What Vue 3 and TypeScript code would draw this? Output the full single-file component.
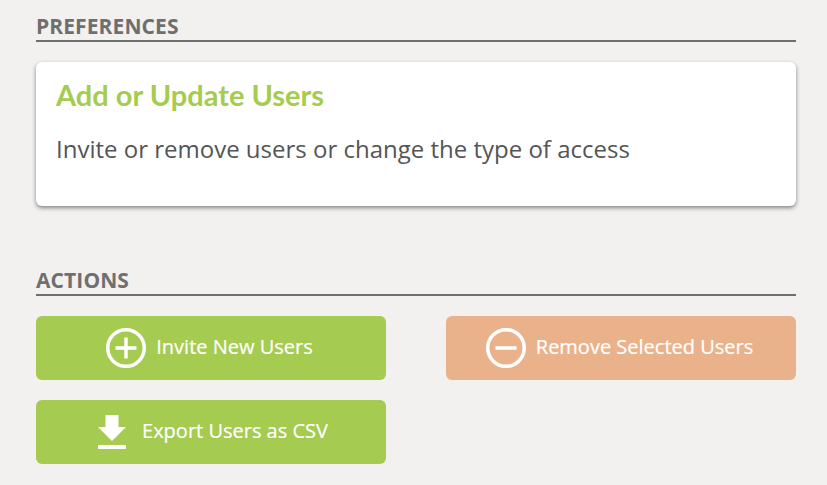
<template>
  <div class="page">
    <section class="section prefs">
      <h2 class="section-title">PREFERENCES</h2>
      <div class="card">
        <h3 class="card-title">Add or Update Users</h3>
        <p class="card-text">Invite or remove users or change the type of access</p>
      </div>
    </section>

    <section class="section">
      <h2 class="section-title">ACTIONS</h2>
      <div class="actions">
        <button
          v-for="a in actions"
          :key="a.label"
          class="action-btn"
          :class="{ danger: a.icon === 'minus', 'with-download': a.icon === 'download' }"
        >
          <svg v-if="a.icon === 'download'" viewBox="0 0 28 34" width="28" height="34">
            <path d="M7.500 0H20.500V12H28L14 26L0 12H7.500Z" fill="#fff" />
            <rect x="0" y="30" width="28" height="4" fill="#fff" />
          </svg>
          <svg v-else viewBox="0 0 40 40" width="40" height="40">
            <circle cx="20" cy="20" r="18.250" fill="none" stroke="#fff" stroke-width="3.500" />
            <rect x="9.500" y="18.250" width="21" height="3.500" fill="#fff" />
            <rect v-if="a.icon === 'plus'" x="18.250" y="9.500" width="3.500" height="21" fill="#fff" />
          </svg>
          <span>{{ a.label }}</span>
        </button>
      </div>
    </section>
  </div>
</template>

<script setup lang="ts">
interface Action {
  label: string;
  icon: 'plus' | 'minus' | 'download';
}

const actions: Action[] = [
  { label: 'Invite New Users', icon: 'plus' },
  { label: 'Remove Selected Users', icon: 'minus' },
  { label: 'Export Users as CSV', icon: 'download' },
];
</script>

<style>
html, body { margin: 0; background: #f2f1ef; }
</style>

<style scoped>
.page {
  box-sizing: border-box;
  width: 827px;
  height: 485px;
  padding: 13px 31px 0 36px;
  background: #f2f1ef;
  font-family: "Open Sans", sans-serif;
  overflow: hidden;
}

.prefs { margin-bottom: 61px; }

.section-title {
  margin: 0;
  height: 27px;
  line-height: 27px;
  font-size: 21px;
  font-weight: 700;
  letter-spacing: 0.1px;
  color: #6f6f6d;
  border-bottom: 2px solid #6f6f6d;
}

.card {
  box-sizing: border-box;
  height: 144px;
  margin-top: 20px;
  padding: 15px 20px;
  background: #fff;
  border-radius: 6px;
  box-shadow: 0 2px 4px rgba(0, 0, 0, 0.45);
}

.card-title {
  margin: 0;
  font-family: Lato, sans-serif;
  font-size: 29px;
  line-height: 36px;
  font-weight: 700;
  color: #a5cb50;
}

.card-text {
  margin: 20px 0 0;
  font-size: 24px;
  line-height: 32px;
  color: #555;
}

.actions {
  display: grid;
  grid-template-columns: 350px 350px;
  grid-auto-rows: 64px;
  column-gap: 60px;
  row-gap: 20px;
  margin-top: 20px;
}

.action-btn {
  display: flex;
  align-items: center;
  justify-content: center;
  gap: 10px;
  padding: 0 3px 0 0;
  border: 0;
  border-radius: 6px;
  background: #a5cb50;
  color: #fff;
  font-family: "Open Sans", sans-serif;
  font-size: 20px;
  font-weight: 400;
  -webkit-text-stroke: 0.2px #fff;
}

.action-btn span { position: relative; top: -2px; }

.action-btn.danger { background: #eab28a; }
.action-btn.with-download { gap: 16px; padding: 0 0 0 4px; }
</style>
